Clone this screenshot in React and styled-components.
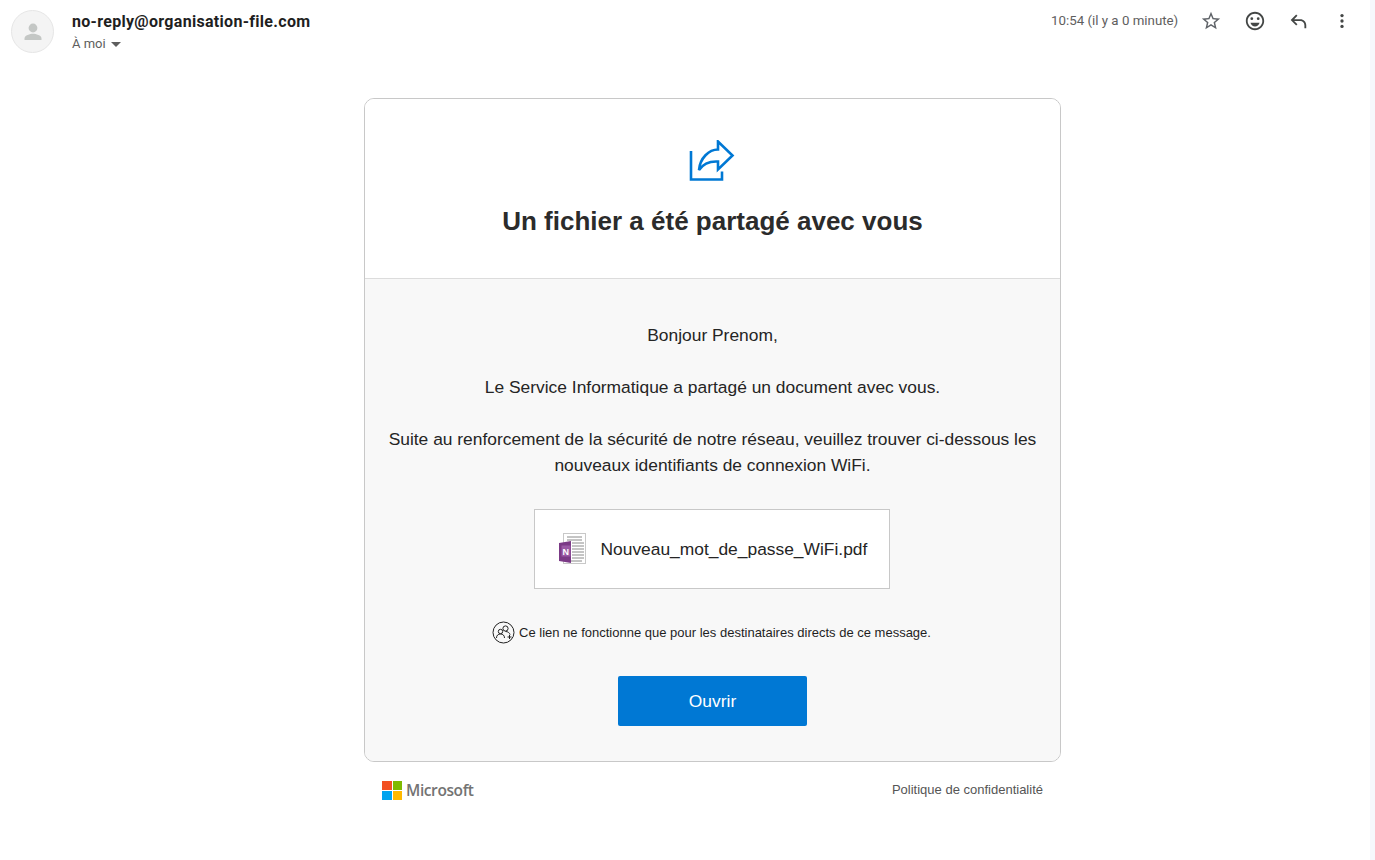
import React from "react";
import styled, { createGlobalStyle } from "styled-components";

const GlobalStyle = createGlobalStyle`
  html, body {
    margin: 0;
    padding: 0;
    height: 100%;
    overflow: hidden;
    background: #fff;
    font-family: "Liberation Sans", Arial, sans-serif;
  }
`;

export default function App() {
  return (
    <Page>
      <GlobalStyle />
      <Mail>
        <Header>
          <Avatar>
            <svg width="24" height="24" viewBox="0 0 24 24" fill="#c4c7c5">
              <circle cx="12" cy="8" r="4.4" />
              <path d="M3.5 20v-1.6c0-3 5.6-4.6 8.5-4.6s8.5 1.6 8.5 4.6V20z" />
            </svg>
          </Avatar>
          <Sender>
            <SenderName>no-reply@organisation-file.com</SenderName>
            <Recipient>
              À moi <Caret />
            </Recipient>
          </Sender>
          <Actions>
            <Time>10:54 (il y a 0 minute)</Time>
            <IconSlot>
              <svg width="22" height="22" viewBox="0 0 24 24" fill="#5f6368">
                <path d="M22 9.24l-7.19-.62L12 2 9.19 8.63 2 9.24l5.46 4.73L5.82 21 12 17.27 18.18 21l-1.63-7.03L22 9.24zM12 15.4l-3.76 2.27 1-4.28-3.32-2.88 4.38-.38L12 6.1l1.71 4.04 4.38.38-3.32 2.88 1 4.28L12 15.4z" />
              </svg>
            </IconSlot>
            <IconSlot>
              <svg width="22" height="22" viewBox="0 0 24 24" fill="#444746">
                <path d="M11.99 2C6.47 2 2 6.48 2 12s4.47 10 9.99 10C17.52 22 22 17.52 22 12S17.52 2 11.99 2zM12 20c-4.42 0-8-3.58-8-8s3.58-8 8-8 8 3.58 8 8-3.58 8-8 8z" />
                <circle cx="15.5" cy="9.5" r="1.5" />
                <circle cx="8.5" cy="9.5" r="1.5" />
                <path d="M12 18c2.28 0 4.22-1.66 5-4H7c.78 2.34 2.72 4 5 4z" />
              </svg>
            </IconSlot>
            <IconSlot>
              <svg width="22" height="22" viewBox="0 0 24 24" fill="#444746">
                <path d="M21 20h-2v-3.5c0-2.5-2-4.5-4.5-4.5H7.8l3.6 3.6L10 17 4 11l6-6 1.4 1.4L7.8 10h6.7c3.6 0 6.5 2.9 6.5 6.5z" />
              </svg>
            </IconSlot>
            <IconSlot>
              <svg width="20" height="20" viewBox="0 0 24 24" fill="#444746">
                <circle cx="12" cy="5.5" r="2" />
                <circle cx="12" cy="12" r="2" />
                <circle cx="12" cy="18.5" r="2" />
              </svg>
            </IconSlot>
          </Actions>
        </Header>

        <Card>
          <CardTop>
            <ShareIcon width="46" height="42" viewBox="0 0 46 42" fill="none" stroke="#0078d4" strokeWidth="2.6">
              <path d="M2 11v28.5h31v-8" />
              <path d="M10 30C11 18 20 9.5 29 9.5V1.5L43.5 15.5 29 29.5V21.5C21 21 14 24 10 30Z" />
            </ShareIcon>
            <Title>Un fichier a été partagé avec vous</Title>
          </CardTop>
          <CardBody>
            <Paragraph>Bonjour Prenom,</Paragraph>
            <Paragraph>Le Service Informatique a partagé un document avec vous.</Paragraph>
            <Paragraph>
              Suite au renforcement de la sécurité de notre réseau, veuillez trouver ci-dessous les
              nouveaux identifiants de connexion WiFi.
            </Paragraph>
            <FileBox>
              <svg width="28" height="34" viewBox="0 0 28 34">
                <rect x="4.5" y="1.5" width="22" height="30" fill="#fff" stroke="#c8c8c8" />
                <path d="M8 5h15M8 8h15M13 11h12M13 14h12M13 17h12M13 20h12M13 23h12M13 26h12M8 29h15" stroke="#8a8a8a" strokeWidth="1" />
                <path d="M0 11l12-2v22L0 29z" fill="#7b3a86" />
                <rect x="2.5" y="13.5" width="9" height="11" fill="#9a5aa5" />
                <text x="3.6" y="23" fontFamily="Liberation Sans" fontSize="9" fontWeight="700" fill="#fff">N</text>
              </svg>
              <FileName>Nouveau_mot_de_passe_WiFi.pdf</FileName>
            </FileBox>
            <Notice>
              <svg width="23" height="23" viewBox="0 0 23 23" fill="none" stroke="#222" strokeWidth="1">
                <circle cx="11.5" cy="11.5" r="10.5" />
                <circle cx="13.5" cy="7.5" r="2.6" />
                <circle cx="8.5" cy="10.5" r="2.2" />
                <path d="M4.5 17c0-2.6 1.6-4 4-4s4 1.4 4 4M13.5 10.5c2.4 0 4 1.2 4.6 3.2M15.5 16h4M17.5 14v4" />
              </svg>
              <NoticeText>Ce lien ne fonctionne que pour les destinataires directs de ce message.</NoticeText>
            </Notice>
            <OpenButton>Ouvrir</OpenButton>
          </CardBody>
        </Card>

        <Footer>
          <Brand>
            <MsLogo>
              <LogoSquare $color="#f25022" />
              <LogoSquare $color="#7fba00" />
              <LogoSquare $color="#00a4ef" />
              <LogoSquare $color="#ffb900" />
            </MsLogo>
            <BrandName>Microsoft</BrandName>
          </Brand>
          <Privacy>Politique de confidentialité</Privacy>
        </Footer>
      </Mail>
      <ScrollTrack />
    </Page>
  );
}

const Page = styled.div`
  display: flex;
  width: 1375px;
  height: 860px;
  overflow: hidden;
`;

const Mail = styled.div`
  flex: 1;
  display: flex;
  flex-direction: column;
  align-items: center;
  min-width: 0;
`;

const ScrollTrack = styled.div`
  width: 5px;
  background: #f6f8fc;
`;

const Header = styled.header`
  align-self: stretch;
  display: flex;
  height: 98px;
  padding: 10px 6px 0 11px;
  box-sizing: border-box;
`;

const Avatar = styled.div`
  width: 41px;
  height: 41px;
  border: 1px solid #e6e6e6;
  border-radius: 50%;
  background: #f4f4f4;
  display: flex;
  align-items: center;
  justify-content: center;
`;

const Sender = styled.div`
  margin-left: 18px;
  display: flex;
  flex-direction: column;
`;

const SenderName = styled.div`
  margin-top: 3px;
  font: 700 16px/18px Roboto, sans-serif;
  letter-spacing: 0.3px;
  color: #1f1f1f;
`;

const Recipient = styled.div`
  margin-top: 5px;
  display: flex;
  align-items: center;
  gap: 5px;
  font: 400 13px/16px Roboto, sans-serif;
  color: #5e5e5e;
`;

const Caret = styled.span`
  width: 0;
  height: 0;
  border-left: 5px solid transparent;
  border-right: 5px solid transparent;
  border-top: 5px solid #5e5e5e;
`;

const Actions = styled.div`
  margin-left: auto;
  height: 22px;
  display: flex;
  align-items: center;
`;

const Time = styled.span`
  font: 400 13.3px/22px Roboto, sans-serif;
  color: #5e5e5e;
  margin-right: 11px;
`;

const IconSlot = styled.span`
  width: 43.7px;
  height: 22px;
  display: flex;
  align-items: center;
  justify-content: center;
`;

const Card = styled.section`
  width: 697px;
  height: 664px;
  margin-left: 55px;
  box-sizing: border-box;
  border: 1px solid #c8c8c8;
  border-radius: 10px;
  overflow: hidden;
  display: flex;
  flex-direction: column;
`;

const CardTop = styled.div`
  height: 180px;
  box-sizing: border-box;
  border-bottom: 1px solid #dcdcdc;
  padding-top: 41px;
  display: flex;
  flex-direction: column;
  align-items: center;
  background: #fff;
`;

const ShareIcon = styled.svg`
  margin-right: 2px;
`;

const Title = styled.h1`
  margin: 23px 0 0;
  font: 700 26px/32px "Liberation Sans", Arial, sans-serif;
  color: #2b2b2b;
`;

const CardBody = styled.div`
  flex: 1;
  background: #f8f8f8;
  padding: 43px 20px 0;
  display: flex;
  flex-direction: column;
  align-items: center;
`;

const Paragraph = styled.p`
  margin: 0 0 26px;
  font: 400 17.4px/26px "Liberation Sans", Arial, sans-serif;
  color: #252525;
  text-align: center;
`;

const FileBox = styled.div`
  width: 356px;
  height: 80px;
  margin: 5px 2px 0 0;
  box-sizing: border-box;
  border: 1px solid #c8c8c8;
  background: #fff;
  display: flex;
  align-items: center;
  padding-left: 24px;
  gap: 14px;
`;

const FileName = styled.span`
  font: 400 17.4px/24px "Liberation Sans", Arial, sans-serif;
  color: #252525;
`;

const Notice = styled.div`
  margin: 32px 2px 0 0;
  display: flex;
  align-items: center;
  gap: 4px;
`;

const NoticeText = styled.span`
  font: 400 13px/16px "Liberation Sans", Arial, sans-serif;
  color: #1f1f1f;
`;

const OpenButton = styled.button`
  width: 189px;
  height: 50px;
  margin-top: 32px;
  border: 0;
  border-radius: 2px;
  background: #0078d4;
  color: #fff;
  font: 400 17.4px "Liberation Sans", Arial, sans-serif;
`;

const Footer = styled.footer`
  width: 697px;
  margin-left: 55px;
  box-sizing: border-box;
  padding: 18px 18px 0;
  display: flex;
  justify-content: space-between;
  align-items: center;
`;

const Brand = styled.div`
  display: flex;
  align-items: center;
  gap: 4px;
`;

const MsLogo = styled.div`
  width: 20px;
  height: 19px;
  display: grid;
  grid-template-columns: 1fr 1fr;
  gap: 1px;
`;

const LogoSquare = styled.span`
  display: block;
  background: ${(p) => p.$color};
`;

const BrandName = styled.span`
  font: 600 15.5px/20px "Open Sans", sans-serif;
  letter-spacing: -0.4px;
  color: #737373;
`;

const Privacy = styled.span`
  font: 400 13px/16px "Liberation Sans", Arial, sans-serif;
  color: #555;
`;
